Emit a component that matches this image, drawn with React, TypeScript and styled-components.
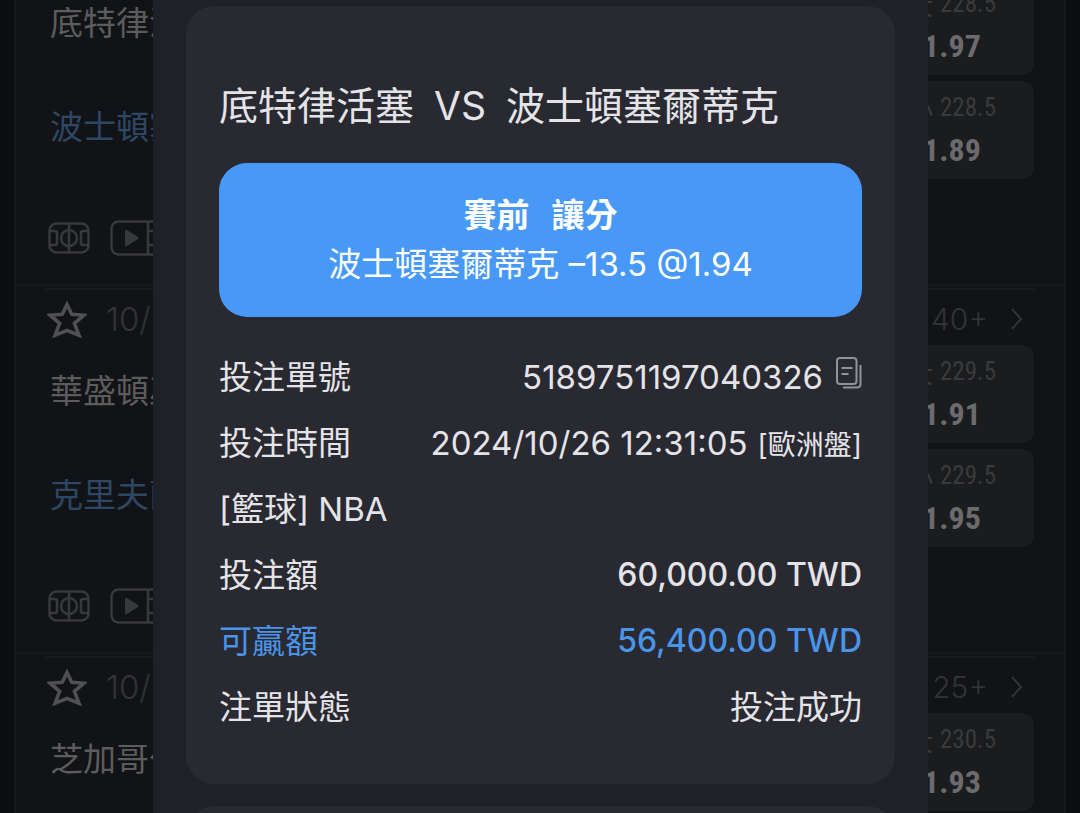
import React from "react";
import styled, { createGlobalStyle } from "styled-components";

const GlobalStyle = createGlobalStyle`
  * { box-sizing: border-box; }
  body {
    margin: 0;
    background: #0c0d10;
    font-family: Inter, "Noto Sans CJK TC", sans-serif;
  }
  button { font: inherit; border: 0; padding: 0; background: none; color: inherit; }
`;

const Page = styled.div`
  height: 100vh;
  overflow: hidden;
  padding: 0 14px;
`;

/* The list is scrolled part of the way into its first match. */
const MatchList = styled.main`
  margin-top: -82px;
  background: #121316;
  border: 2px solid #17181b;
  border-width: 0 2px;
`;

const Match = styled.article`
  height: 368px;
  padding: 2px 30px 0;
  border-bottom: 2px solid #17181b;
`;

const MatchHeader = styled.header`
  display: flex;
  align-items: center;
  height: 57px;
  padding: 2px 11px 0 0;
  border-top: 2px solid #1a1b1e;
  color: #323336;
  font-size: 30px;
  font-weight: 300;
  line-height: 36px;
`;

const StarButton = styled.button`
  display: flex;
  width: 60px;
  padding-left: 1px;
  color: #505052;
`;

const MatchDate = styled.time`
  font-size: 33px;
`;

const MoreLink = styled.a`
  display: flex;
  align-items: center;
  gap: 22px;
  margin-left: auto;
  color: inherit;
  text-decoration: none;
`;

const Side = styled.div`
  display: flex;
  justify-content: space-between;
  height: 98px;
  & + & { margin-top: 6px; }
`;

const Team = styled.span<{ $picked?: boolean }>`
  padding-left: 4px;
  font-size: 33px;
  line-height: 92px;
  color: ${(p) => (p.$picked ? "#2d4765" : "#5c5c5d")};
`;

const Odds = styled.button`
  display: flex;
  flex-direction: column;
  align-items: center;
  width: 164px;
  padding-top: 7px;
  border-radius: 12px;
  background: #1b1c1e;
  font-family: "Roboto Condensed", Roboto, "Noto Sans CJK TC", sans-serif;
`;

const Line = styled.span`
  display: flex;
  align-items: center;
  gap: 7px;
  color: #3a3a3c;
  font-size: 25px;
  line-height: 40px;
`;

const Mark = styled.span`
  font-family: "Noto Sans CJK TC", sans-serif;
`;

const Price = styled.span`
  color: #6b6b6d;
  font-size: 32px;
  font-weight: 700;
  line-height: 44px;
`;

const Tools = styled.div`
  display: flex;
  align-items: center;
  gap: 20px;
  height: 106px;
  padding: 12px 0 0 2px;
  color: #38393b;
`;

const Overlay = styled.div`
  position: fixed;
  inset: 0;
  display: flex;
  justify-content: center;
  padding: 0 152px 0 153px;
  overflow: hidden;
`;

const Dialog = styled.section`
  flex: 1;
  display: flex;
  flex-direction: column;
  gap: 22px;
  padding: 6px 33px 0;
  background: #202029;
`;

const Card = styled.div`
  flex-shrink: 0;
  min-height: 120px;
  padding: 72px 33px 44px;
  border-radius: 28px;
  background: #292931;
  color: #e4e4e8;
`;

const Title = styled.h1`
  display: flex;
  gap: 20px;
  margin: 0 0 29px;
  font-size: 39px;
  font-weight: 400;
  line-height: 56px;
  white-space: nowrap;
`;

const Banner = styled.div`
  padding: 28px 16px;
  border-radius: 28px;
  background: #4899f7;
  color: #fff;
  font-size: 33px;
  line-height: 49px;
  text-align: center;
`;

const Market = styled.div`
  display: flex;
  justify-content: center;
  gap: 22px;
  font-weight: 700;
`;

const Details = styled.dl`
  margin: 27px 0 0;
`;

const Row = styled.div<{ $accent?: boolean }>`
  display: flex;
  justify-content: space-between;
  height: 66px;
  font-size: 33px;
  line-height: 66px;
  white-space: nowrap;
  color: ${(p) => (p.$accent ? "#4a94ea" : "inherit")};
`;

const Term = styled.dt`
  margin: 0;
`;

const Value = styled.dd`
  display: flex;
  align-items: baseline;
  margin: 0;
`;

const TicketNumber = styled(Value)`
  align-items: center;
`;

const Amount = styled(Value)`
  font-size: 32px;
  font-weight: 500;
`;

const Note = styled.small`
  margin-left: 10px;
  font-size: 28px;
`;

const CopyButton = styled.button`
  display: flex;
  margin: 0 0 8px 13px;
  color: #92929b;
`;

const Star = () => (
  <svg width="40" height="38" viewBox="0 0 40 38" fill="none" stroke="currentColor" strokeWidth="3.500">
    <path d="M20 4.500l4.800 9.800 12.200.9-9.600 8.100 4.600 12L20 30.400 8 35.300l4.600-12L3 15.200l12.200-.9z" />
  </svg>
);

const Chevron = () => (
  <svg width="13" height="24" viewBox="0 0 13 24" fill="none" stroke="currentColor" strokeWidth="2">
    <path d="M2 2l9 10-9 10" />
  </svg>
);

const Court = () => (
  <svg width="42" height="32" viewBox="0 0 42 32" fill="none" stroke="currentColor" strokeWidth="2.500">
    <rect x="1.500" y="1.500" width="39" height="29" rx="7" />
    <circle cx="21" cy="16" r="8" />
    <path d="M21 1v30M2 9h5q2 0 2 2v10q0 2-2 2H2M40 9h-5q-2 0-2 2v10q0 2 2 2h5" />
  </svg>
);

const Video = () => (
  <svg width="54" height="36" viewBox="0 0 54 36" fill="none" stroke="currentColor" strokeWidth="2.500">
    <rect x="1.500" y="1.500" width="51" height="33" rx="7" />
    <path d="M38 1v34M38 11h14M38 25h14" />
    <path d="M15 11v14q0 2 2 1l11-7q1-1 0-2L17 10q-2-1-2 1z" fill="currentColor" stroke="none" />
  </svg>
);

const Copy = () => (
  <svg width="26" height="32" viewBox="0 0 26 32" fill="none" stroke="currentColor" strokeWidth="2">
    <rect x="1" y="1" width="19.500" height="26" rx="3" />
    <path d="M5.500 11H16.500M5.500 17H12.500M24.500 8v19q0 3.500-3.500 3.500H7" />
  </svg>
);

type MatchData = {
  id: number;
  more: string;
  total: string;
  sides: { team: string; mark: string; price: string; picked?: boolean }[];
};

const matches: MatchData[] = [
  {
    id: 1,
    more: "40+",
    total: "228.5",
    sides: [
      { team: "底特律活塞", mark: "大", price: "1.97" },
      { team: "波士頓塞爾蒂克", mark: "小", price: "1.89", picked: true },
    ],
  },
  {
    id: 2,
    more: "40+",
    total: "229.5",
    sides: [
      { team: "華盛頓巫師", mark: "大", price: "1.91" },
      { team: "克里夫蘭騎士", mark: "小", price: "1.95", picked: true },
    ],
  },
  {
    id: 3,
    more: "25+",
    total: "230.5",
    sides: [{ team: "芝加哥公牛", mark: "大", price: "1.93" }],
  },
];

export default function App() {
  return (
    <>
      <GlobalStyle />
      <Page>
        <MatchList>
          {matches.map((m) => (
            <Match key={m.id}>
              <MatchHeader>
                <StarButton aria-label="收藏"><Star /></StarButton>
                <MatchDate>10/27</MatchDate>
                <MoreLink href="#more">{m.more}<Chevron /></MoreLink>
              </MatchHeader>
              {m.sides.map((s) => (
                <Side key={s.team}>
                  <Team $picked={s.picked}>{s.team}</Team>
                  <Odds>
                    <Line><Mark>{s.mark}</Mark>{m.total}</Line>
                    <Price>{s.price}</Price>
                  </Odds>
                </Side>
              ))}
              <Tools><Court /><Video /></Tools>
            </Match>
          ))}
        </MatchList>
      </Page>
      <Overlay>
        <Dialog role="dialog" aria-labelledby="bet-title">
          <Card>
            <Title id="bet-title">
              <span>底特律活塞</span><span>VS</span><span>波士頓塞爾蒂克</span>
            </Title>
            <Banner>
              <Market><span>賽前</span><span>讓分</span></Market>
              <div>波士頓塞爾蒂克 –13.5 @1.94</div>
            </Banner>
            <Details>
              <Row>
                <Term>投注單號</Term>
                <TicketNumber>
                  5189751197040326
                  <CopyButton aria-label="複製"><Copy /></CopyButton>
                </TicketNumber>
              </Row>
              <Row>
                <Term>投注時間</Term>
                <Value>2024/10/26 12:31:05<Note>[歐洲盤]</Note></Value>
              </Row>
              <Row>
                <Term>[籃球] NBA</Term>
              </Row>
              <Row>
                <Term>投注額</Term>
                <Amount>60,000.00 TWD</Amount>
              </Row>
              <Row $accent>
                <Term>可贏額</Term>
                <Amount>56,400.00 TWD</Amount>
              </Row>
              <Row>
                <Term>注單狀態</Term>
                <Value>投注成功</Value>
              </Row>
            </Details>
          </Card>
          <Card />
        </Dialog>
      </Overlay>
    </>
  );
}
